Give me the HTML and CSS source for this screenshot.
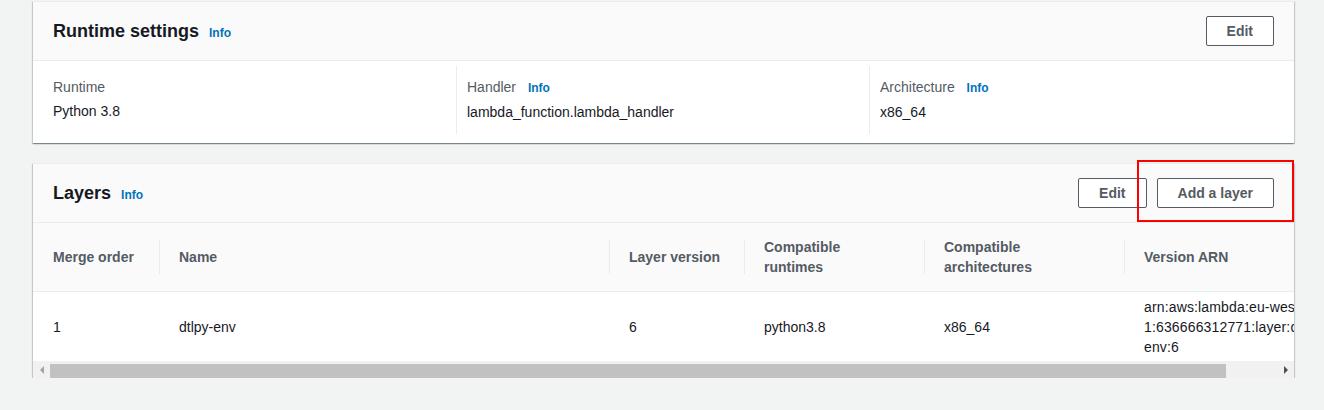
FILE: index.html
```html
<!DOCTYPE html>
<html lang="en">
<head>
<meta charset="utf-8">
<title>Lambda function configuration</title>
<link rel="stylesheet" href="styles.css">
</head>
<body>
<div class="page">
  <section class="card">
    <header class="card-head">
      <h2 class="card-title">Runtime settings <a class="info" href="#">Info</a></h2>
      <div class="actions">
        <button class="btn" type="button">Edit</button>
      </div>
    </header>
    <div class="kv">
      <div class="kv-col">
        <div class="kv-label">Runtime</div>
        <div class="kv-value">Python 3.8</div>
      </div>
      <div class="kv-col kv-col-div">
        <div class="kv-label">Handler <a class="info" href="#">Info</a></div>
        <div class="kv-value">lambda_function.lambda_handler</div>
      </div>
      <div class="kv-col kv-col-div">
        <div class="kv-label">Architecture <a class="info" href="#">Info</a></div>
        <div class="kv-value">x86_64</div>
      </div>
    </div>
  </section>

  <section class="card card-layers">
    <header class="card-head">
      <h2 class="card-title">Layers <a class="info" href="#">Info</a></h2>
      <div class="actions">
        <button class="btn" type="button">Edit</button>
        <button class="btn" type="button">Add a layer</button>
      </div>
    </header>
    <div class="highlight"></div>
    <div class="table-wrap">
      <table class="layers">
        <colgroup>
          <col class="c-order">
          <col class="c-name">
          <col class="c-version">
          <col class="c-runtimes">
          <col class="c-arch">
          <col class="c-arn">
        </colgroup>
        <thead>
          <tr>
            <th>Merge order</th>
            <th class="sep">Name</th>
            <th class="sep">Layer version</th>
            <th class="sep th-narrow">Compatible runtimes</th>
            <th class="sep">Compatible architectures</th>
            <th class="sep">Version ARN</th>
          </tr>
        </thead>
        <tbody>
          <tr>
            <td>1</td>
            <td>dtlpy-env</td>
            <td>6</td>
            <td>python3.8</td>
            <td>x86_64</td>
            <td class="arn">arn:aws:lambda:eu-west-<wbr>1:636666312771:layer:dtlpy-<wbr>env:6</td>
          </tr>
        </tbody>
      </table>
    </div>
    <div class="hscroll">
      <div class="hs-btn"><span class="arrow arrow-left"></span></div>
      <div class="hs-track"><div class="hs-thumb"></div></div>
      <div class="hs-btn"><span class="arrow arrow-right"></span></div>
    </div>
  </section>
</div>
</body>
</html>
```

FILE: styles.css
```css
* {
  box-sizing: border-box;
}

html, body {
  margin: 0;
  padding: 0;
  background: #f2f3f3;
}

body {
  font-family: "Liberation Sans", Arial, sans-serif;
  font-size: 14px;
  line-height: 22px;
  color: #16191f;
}

.page {
  padding: 1px 30px 0 33px;
}

.card {
  width: 1261px;
  background: #ffffff;
  border-top: 1px solid #eaeded;
  box-shadow: 0 1px 1px 0 rgba(0, 28, 36, 0.3),
              1px 1px 1px 0 rgba(0, 28, 36, 0.15),
              -1px 1px 1px 0 rgba(0, 28, 36, 0.15);
}

.card + .card {
  margin-top: 20px;
}

.card-layers {
  position: relative;
}

.card-head {
  display: flex;
  align-items: center;
  justify-content: space-between;
  padding: 14px 20px;
  background: #fafafa;
  border-bottom: 1px solid #eaeded;
}

.card-title {
  margin: 0;
  font-size: 18px;
  line-height: 22px;
  font-weight: 700;
  color: #16191f;
  position: relative;
  top: 1px;
}

.info {
  margin-left: 5px;
  font-size: 12px;
  font-weight: 700;
  color: #0073bb;
  text-decoration: none;
}

.actions {
  display: flex;
  gap: 10px;
}

.btn {
  font-family: "Liberation Sans", Arial, sans-serif;
  font-size: 14px;
  line-height: 22px;
  font-weight: 700;
  color: #545b64;
  background: #ffffff;
  border: 1px solid #545b64;
  border-radius: 2px;
  padding: 3px 20px;
  cursor: pointer;
}

/* key / value columns */
.kv {
  display: grid;
  grid-template-columns: 403px 413px 1fr;
  padding: 5px 20px 9px;
}

.kv-col {
  padding: 10px 0 11px;
}

.kv-col-div {
  border-left: 1px solid #eaeded;
  padding-left: 10px;
}

.kv-label {
  color: #545b64;
  margin-bottom: 2px;
}

.kv-label .info {
  margin-left: 8px;
}

.kv-value {
  color: #16191f;
}

/* table */
.table-wrap {
  overflow: hidden;
}

.layers {
  width: 1315px;
  table-layout: fixed;
  border-collapse: separate;
  border-spacing: 0;
}

.c-order { width: 126px; }
.c-name { width: 450px; }
.c-version { width: 135px; }
.c-runtimes { width: 180px; }
.c-arch { width: 200px; }
.c-arn { width: 224px; }

.layers th {
  text-align: left;
  vertical-align: middle;
  font-weight: 700;
  color: #545b64;
  line-height: 20px;
  padding: 14px 20px;
  background-color: #fafafa;
  border-bottom: 1px solid #eaeded;
}

.layers th.sep {
  background-image: linear-gradient(#eaeded, #eaeded);
  background-repeat: no-repeat;
  background-position: left center;
  background-size: 1px 34px;
}

.layers th.th-narrow {
  padding-right: 40px;
}

.layers td {
  vertical-align: middle;
  line-height: 20px;
  padding: 5px 20px 4px;
  color: #16191f;
}

.layers td.arn {
  letter-spacing: 0.15px;
}

/* horizontal scrollbar */
.hscroll {
  display: flex;
  height: 17px;
  background: #f1f1f1;
}

.hs-btn {
  width: 17px;
  display: flex;
  align-items: center;
  justify-content: center;
}

.hs-track {
  flex: 1;
  padding: 3px 51px 0 0;
}

.hs-thumb {
  height: 14px;
  background: #c1c1c1;
}

.arrow {
  width: 0;
  height: 0;
  border-top: 4px solid transparent;
  border-bottom: 4px solid transparent;
}

.arrow-left {
  border-right: 4px solid #a3a3a3;
}

.arrow-right {
  border-left: 4px solid #505050;
}

/* annotation overlay */
.highlight {
  position: absolute;
  top: -4px;
  left: 1104px;
  width: 157px;
  height: 62px;
  border: 2px solid #ff0000;
  pointer-events: none;
}
```
